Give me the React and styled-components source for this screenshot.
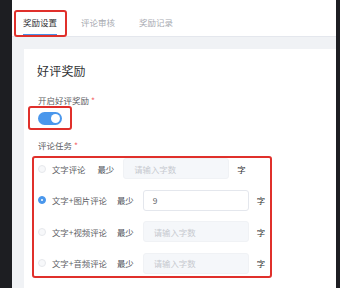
import React from 'react'
import styled, { createGlobalStyle } from 'styled-components'

const GlobalStyle = createGlobalStyle`
  html, body {
    margin: 0;
    padding: 0;
    background: #1d1e22;
  }
  body {
    font-family: 'Noto Sans CJK SC', 'Noto Sans', sans-serif;
    color: #606266;
  }
`

const StyledFrame = styled.div`
  display: flex;
  height: 288px;
  width: 340px;
  overflow: hidden;
`
const StyledEdge = styled.div`
  flex: 0 0 ${({ $w }) => $w}px;
  background: #1d1e22;
`
const StyledMain = styled.div`
  flex: 1;
  display: flex;
  flex-direction: column;
  background: #f0f2f5;
  min-width: 0;
`
const StyledNav = styled.div`
  display: flex;
  height: 36px;
  background: #fff;
  border-bottom: 1px solid #e4e7ed;
  padding-left: 11px;
  gap: 24px;
`
const StyledTab = styled.div`
  position: relative;
  box-sizing: border-box;
  height: 36px;
  padding-top: 16px;
  font-size: 8.5px;
  line-height: 12px;
  color: ${({ $active }) => ($active ? '#303133' : '#a8abb2')};
  border-bottom: 2px solid ${({ $active }) => ($active ? '#4a8fe6' : 'transparent')};

  ${({ $marked }) =>
    $marked &&
    `
    &::after {
      content: '';
      position: absolute;
      left: -9px;
      right: -10px;
      top: 10px;
      bottom: -3px;
      border: 2px solid #e0302b;
      border-radius: 3px;
    }
  `}
`
const StyledCard = styled.div`
  flex: 1;
  margin: 12px 0 0 12px;
  background: #fff;
  padding: 13px 0 0 13px;
  display: flex;
  flex-direction: column;
  align-items: flex-start;
`
const StyledTitle = styled.div`
  font-size: 12px;
  line-height: 18px;
  color: #303133;
  letter-spacing: 0.2px;
`
const StyledLabel = styled.div`
  font-size: 8.5px;
  line-height: 12px;
  color: #606266;
  margin-top: ${({ $mt }) => $mt}px;
  margin-left: 1px;

  &::after {
    content: ' *';
    color: #f56c6c;
  }
`
const StyledMark = styled.div`
  border: 2px solid #e0302b;
  border-radius: 3px;
  box-sizing: border-box;
`
const StyledSwitchMark = styled(StyledMark)`
  margin-left: -9px;
  padding: 4px 8px 3px 8px;
  display: flex;
`
const StyledSwitch = styled.span`
  position: relative;
  width: 24px;
  height: 13px;
  border-radius: 7px;
  background: #4a97ec;

  &::after {
    content: '';
    position: absolute;
    right: 2px;
    top: 2px;
    width: 9px;
    height: 9px;
    border-radius: 50%;
    background: #fff;
  }
`
const StyledTaskMark = styled(StyledMark)`
  margin: 5px 0 0 -5px;
  width: 240px;
  height: 122px;
  padding: 0 0 0 4px;
  display: flex;
  flex-direction: column;
  gap: 10.5px;
`
const StyledRow = styled.div`
  display: flex;
  align-items: center;
  height: 21px;
  font-size: 8.4px;
  color: #606266;
`
const StyledRadio = styled.span`
  box-sizing: border-box;
  flex: 0 0 8px;
  height: 8px;
  border-radius: 50%;
  margin-right: 6px;
  border: 1px solid ${({ $checked }) => ($checked ? '#4a97ec' : '#e6e8ec')};
  background: ${({ $checked }) => ($checked ? '#4a97ec' : '#f7f8fa')};
  position: relative;

  ${({ $checked }) =>
    $checked &&
    `
    &::after {
      content: '';
      position: absolute;
      left: 2px;
      top: 2px;
      width: 2px;
      height: 2px;
      border-radius: 50%;
      background: #fff;
    }
  `}
`
const StyledName = styled.span`
  margin-right: ${({ $gap }) => $gap}px;
  white-space: nowrap;
`
const StyledMin = styled.span`
  margin-right: 9px;
  color: #4a4d55;
`
const StyledInput = styled.div`
  box-sizing: border-box;
  width: 106px;
  height: 21px;
  border-radius: 3px;
  padding-left: ${({ $value }) => ($value ? 9 : 10)}px;
  display: flex;
  align-items: center;
  background: ${({ $value }) => ($value ? '#fff' : '#f5f7fa')};
  border: 1px solid ${({ $value }) => ($value ? '#e4e7ed' : '#f0f2f5')};
  color: ${({ $value }) => ($value ? '#606266' : '#c6c9cf')};
  margin-right: 8px;
`
const StyledUnit = styled.span`
  color: #303133;
`

const tabs = [
  { name: '奖励设置', active: true },
  { name: '评论审核' },
  { name: '奖励记录' },
]

const tasks = [
  { name: '文字评论', gap: 12 },
  { name: '文字+图片评论', gap: 10, checked: true, value: '9' },
  { name: '文字+视频评论', gap: 10 },
  { name: '文字+音频评论', gap: 10 },
]

const App = () => (
  <>
    <GlobalStyle />
    <StyledFrame>
      <StyledEdge $w={12} />
      <StyledMain>
        <StyledNav>
          {tabs.map(({ name, active }) => (
            <StyledTab key={name} $active={active} $marked={active}>
              {name}
            </StyledTab>
          ))}
        </StyledNav>
        <StyledCard>
          <StyledTitle>好评奖励</StyledTitle>
          <StyledLabel $mt={14}>开启好评奖励</StyledLabel>
          <StyledSwitchMark>
            <StyledSwitch />
          </StyledSwitchMark>
          <StyledLabel $mt={9}>评论任务</StyledLabel>
          <StyledTaskMark>
            {tasks.map(({ name, gap, checked, value }) => (
              <StyledRow key={name}>
                <StyledRadio $checked={checked} />
                <StyledName $gap={gap}>{name}</StyledName>
                <StyledMin>最少</StyledMin>
                <StyledInput $value={value}>{value || '请输入字数'}</StyledInput>
                <StyledUnit>字</StyledUnit>
              </StyledRow>
            ))}
          </StyledTaskMark>
        </StyledCard>
      </StyledMain>
      <StyledEdge $w={4} />
    </StyledFrame>
  </>
)

export default App
